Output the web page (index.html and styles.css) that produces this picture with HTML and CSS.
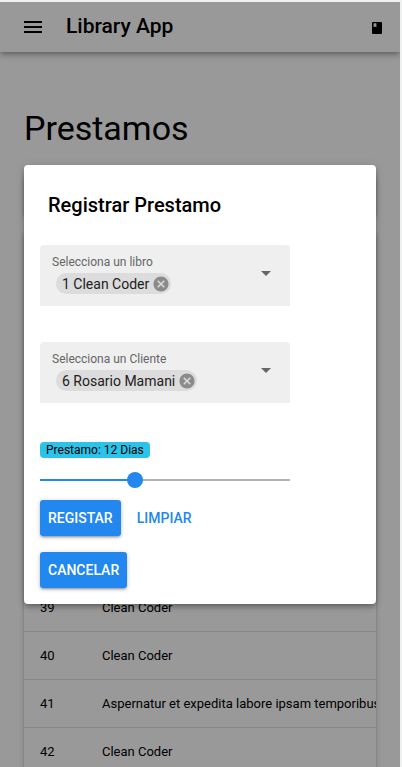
FILE: index.html
```html
<!DOCTYPE html>
<html lang="es">
<head>
<meta charset="utf-8">
<meta name="viewport" content="width=device-width, initial-scale=1">
<title>Library App</title>
<link rel="stylesheet" href="styles.css">
</head>
<body>
<div class="app">
  <header class="header">
    <button class="icon-button" type="button" aria-label="Menu">
      <svg width="24" height="24" viewBox="0 0 24 24"><path d="M3 18h18v-2H3v2zm0-5h18v-2H3v2zm0-7v2h18V6H3z"/></svg>
    </button>
    <span class="header-title">Library App</span>
    <svg class="book" width="10" height="12" viewBox="0 0 10 12"><path fill-rule="evenodd" d="M1 0h8a1 1 0 0 1 1 1v10a1 1 0 0 1-1 1H1a1 1 0 0 1-1-1V1a1 1 0 0 1 1-1zM1.600 1.200v4l1.400-.8 1.400.8v-4z"/></svg>
  </header>

  <main class="page">
    <h1 class="page-title">Prestamos</h1>
    <div class="filters"></div>
    <section class="table-card">
      <table class="loans">
        <tbody>
          <tr><td>39</td><td>Clean Coder</td></tr>
          <tr><td>40</td><td>Clean Coder</td></tr>
          <tr><td>41</td><td>Aspernatur et expedita labore ipsam temporibus</td></tr>
          <tr><td>42</td><td>Clean Coder</td></tr>
        </tbody>
      </table>
    </section>
  </main>

  <div class="backdrop">
    <div class="dialog" role="dialog" aria-labelledby="dialog-title">
      <h2 class="dialog-title" id="dialog-title">Registrar Prestamo</h2>
      <form class="form">
        <div class="field">
          <div class="field-main">
            <label class="field-label" for="libro">Selecciona un libro</label>
            <div class="chip">
              <select class="chip-select" id="libro"><option>1 Clean Coder</option></select>
              <button class="chip-remove" type="button" aria-label="Quitar libro">
                <svg width="18" height="18" viewBox="0 0 24 24"><path d="M12 2C6.470 2 2 6.470 2 12s4.470 10 10 10 10-4.470 10-10S17.530 2 12 2zm5 13.590L15.590 17 12 13.410 8.410 17 7 15.590 10.590 12 7 8.410 8.410 7 12 10.590 15.590 7 17 8.410 13.410 12 17 15.590z"/></svg>
              </button>
            </div>
          </div>
          <svg class="arrow" width="24" height="24" viewBox="0 0 24 24"><path d="M7 10l5 5 5-5z"/></svg>
        </div>
        <div class="field">
          <div class="field-main">
            <label class="field-label" for="cliente">Selecciona un Cliente</label>
            <div class="chip">
              <select class="chip-select" id="cliente"><option>6 Rosario Mamani</option></select>
              <button class="chip-remove" type="button" aria-label="Quitar cliente">
                <svg width="18" height="18" viewBox="0 0 24 24"><path d="M12 2C6.470 2 2 6.470 2 12s4.470 10 10 10 10-4.470 10-10S17.530 2 12 2zm5 13.590L15.590 17 12 13.410 8.410 17 7 15.590 10.590 12 7 8.410 8.410 7 12 10.590 15.590 7 17 8.410 13.410 12 17 15.590z"/></svg>
              </button>
            </div>
          </div>
          <svg class="arrow" width="24" height="24" viewBox="0 0 24 24"><path d="M7 10l5 5 5-5z"/></svg>
        </div>
        <label class="badge" for="dias">Prestamo: 12 Dias</label>
        <div class="slider" style="--fill: 38%">
          <input class="slider-input" id="dias" type="range" min="1" max="30" value="12">
        </div>
        <div class="actions">
          <button class="btn btn-primary" type="submit">REGISTAR</button>
          <button class="btn btn-flat" type="reset">LIMPIAR</button>
          <button class="btn btn-primary" type="button">CANCELAR</button>
        </div>
      </form>
    </div>
  </div>
</div>
</body>
</html>
```
FILE: styles.css
```css
:root {
  --primary: #2287ee;
  --info: #2bc3e9;
}

* {
  box-sizing: border-box;
}

body {
  margin: 0;
  padding: 2px 2px 0 0;
  background: #eff0f0;
  color: #000;
  font-family: Roboto, "Liberation Sans", sans-serif;
  font-size: 14px;
}

button,
select {
  font: inherit;
  color: inherit;
  border: 0;
  background: none;
  cursor: pointer;
}

h1,
h2 {
  margin: 0;
}

svg {
  display: block;
  fill: currentColor;
}

/* The page does not scroll while the dialog is open */
.app {
  position: relative;
  height: calc(100vh - 2px);
  overflow: hidden;
  background: #fff;
}

.header {
  position: relative;
  display: flex;
  align-items: center;
  height: 50px;
  padding: 0 18px 0 12px;
  background: #fff;
  box-shadow: 0 2px 4px -1px rgba(0, 0, 0, .2), 0 4px 5px rgba(0, 0, 0, .14), 0 1px 10px rgba(0, 0, 0, .12);
}

.icon-button {
  padding: 9px;
}

.header-title {
  flex: 1;
  padding: 0 0 2px 12px;
  font-size: 21px;
  font-weight: 500;
  line-height: 32px;
}

.book {
  margin-top: 2px;
}

.page {
  padding: 56px 24px 0;
}

.page-title {
  font-size: 34px;
  font-weight: 400;
  line-height: 40px;
}

.filters,
.table-card {
  border-radius: 4px;
  background: #fff;
  box-shadow: 0 1px 5px rgba(0, 0, 0, .2), 0 2px 2px rgba(0, 0, 0, .14), 0 3px 1px -2px rgba(0, 0, 0, .12);
}

.filters {
  height: 40px;
  margin: 28px 0 16px;
}

.table-card {
  overflow: hidden;
  padding-top: 352px;
}

.loans {
  width: 100%;
  border-collapse: separate;
  border-spacing: 0;
}

.loans td {
  height: 48px;
  padding: 0 16px;
  border-bottom: 1px solid rgba(0, 0, 0, .12);
  font-size: 13px;
  white-space: nowrap;
}

.loans td:first-child {
  min-width: 62px;
}

.backdrop {
  position: absolute;
  inset: 0;
  display: flex;
  align-items: center;
  justify-content: center;
  padding: 24px;
  background: rgba(0, 0, 0, .4);
}

.dialog {
  width: 100%;
  max-width: 560px;
  padding: 16px;
  border-radius: 4px;
  background: #fff;
  box-shadow: 0 2px 4px -1px rgba(0, 0, 0, .2), 0 4px 5px rgba(0, 0, 0, .14), 0 1px 10px rgba(0, 0, 0, .12);
}

.dialog-title {
  padding: 8px 8px 24px;
  font-size: 20px;
  font-weight: 500;
  line-height: 32px;
}

.form {
  max-width: 250px;
}

.field {
  display: flex;
  align-items: flex-start;
  justify-content: space-between;
  margin-bottom: 36px;
  padding: 8px 12px 12px;
  border-radius: 4px 4px 0 0;
  background: #efefef;
}

.field-label {
  display: block;
  margin-bottom: 2px;
  color: #666;
  font-size: 12px;
  line-height: 18px;
}

.chip {
  display: inline-flex;
  align-items: center;
  height: 21px;
  margin-left: 4px;
  padding: 0 1px 0 6px;
  border-radius: 11px;
  background: #dcdcdc;
  color: #212121;
  vertical-align: top;
}

.chip-select {
  appearance: none;
  padding: 0;
  line-height: 20px;
}

.chip-remove {
  padding: 0;
  margin-left: 2px;
  color: #8b8b8b;
}

.arrow {
  margin-top: 8px;
  color: #666;
}

.badge {
  display: table;
  margin-top: 39px;
  padding: 2px 6px;
  border-radius: 4px;
  background: var(--info);
  font-size: 12px;
  line-height: 12px;
}

.slider {
  display: flex;
  height: 40px;
  margin: 2px 0 0;
  background:
    linear-gradient(var(--primary), var(--primary)) left center / var(--fill) 2px no-repeat,
    linear-gradient(#b3b3b3, #b3b3b3) center / 100% 2px no-repeat;
}

/* Wider than the track by one thumb, so the thumb's centre reaches both ends */
.slider-input {
  flex: 1;
  min-width: 0;
  margin: 0 -8px;
  appearance: none;
  background: none;
}

.slider-input::-webkit-slider-thumb {
  appearance: none;
  width: 16px;
  height: 16px;
  border-radius: 50%;
  background: var(--primary);
}

.actions {
  display: flex;
  flex-wrap: wrap;
  gap: 16px 8px;
}

.btn {
  height: 36px;
  padding: 0 8px;
  border-radius: 3px;
  font-weight: 500;
}

.btn-primary {
  background: var(--primary);
  color: #fff;
  box-shadow: 0 1px 5px rgba(0, 0, 0, .2), 0 2px 2px rgba(0, 0, 0, .14), 0 3px 1px -2px rgba(0, 0, 0, .12);
}

.btn-flat {
  color: var(--primary);
}
```
